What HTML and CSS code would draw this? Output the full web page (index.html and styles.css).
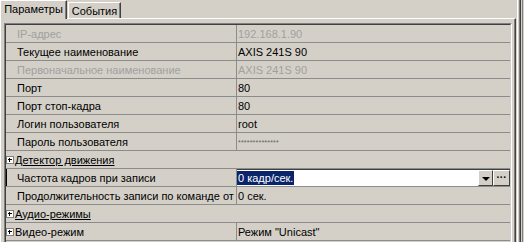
FILE: index.html
```html
<!DOCTYPE html>
<html lang="ru">
<head>
  <meta charset="UTF-8" />
  <title>Параметры</title>
  <link rel="stylesheet" href="styles.css">
</head>
<body>
  <div class="window">
    <div class="tabctl">
      <div class="tabs">
        <div class="tab tab-active">Параметры</div>
        <div class="tab tab-events">События</div>
      </div>
      <div class="page">
        <div class="grid">
          <div class="rows">
            <div class="row disabled"><div class="name">IP-адрес</div><div class="value">192.168.1.90</div></div>
            <div class="row"><div class="name">Текущее наименование</div><div class="value">AXIS 241S 90</div></div>
            <div class="row disabled"><div class="name">Первоначальное наименование</div><div class="value">AXIS 241S 90</div></div>
            <div class="row"><div class="name">Порт</div><div class="value">80</div></div>
            <div class="row"><div class="name">Порт стоп-кадра</div><div class="value">80</div></div>
            <div class="row"><div class="name">Логин пользователя</div><div class="value">root</div></div>
            <div class="row"><div class="name">Пароль пользователя</div><div class="value"><span class="password">**************</span></div></div>
            <div class="row group"><span class="plus"></span><span class="group-name link">Детектор движения</span></div>
            <div class="row current">
              <div class="name">Частота кадров при записи</div>
              <div class="value editor">
                <span class="edit"><span class="sel">0 кадр/сек.</span></span>
                <span class="btn drop"><span class="arrow"></span></span>
                <span class="btn dots">···</span>
              </div>
            </div>
            <div class="row"><div class="name">Продолжительность записи по команде от</div><div class="value">0 сек.</div></div>
            <div class="row group"><span class="plus"></span><span class="group-name link">Аудио-режимы</span></div>
            <div class="row group-value"><div class="name"><span class="plus"></span><span class="group-name">Видео-режим</span></div><div class="value">Режим "Unicast"</div></div>
          </div>
        </div>
      </div>
    </div>
    <div class="edge"></div>
  </div>
</body>
</html>
```

FILE: styles.css
```css
body {
  margin: 0;
  background-color: #d4d0c8;
  font-family: "Liberation Sans", Arial, sans-serif;
  font-size: 11px;
  color: #000;
  overflow: hidden;
}
.window {
  display: flex;
  width: 524px;
  height: 242px;
  overflow: hidden;
}
.tabctl {
  width: 516px;
  display: flex;
  flex-direction: column;
}
.tabs {
  display: flex;
  align-items: flex-end;
  height: 18px;
}
.tab {
  box-sizing: border-box;
  display: flex;
  align-items: center;
  justify-content: center;
  border-top: 1px solid #fff;
  border-left: 1px solid #fff;
  border-right: 1px solid #404040;
  box-shadow: inset -1px 0 #808080;
  background-color: #d4d0c8;
}
.tab-active {
  width: 67px;
  height: 19px;
  margin-bottom: -1px;
  padding-bottom: 2px;
  position: relative;
  z-index: 1;
}
.tab-events {
  width: 53px;
  height: 16px;
  margin-left: 1px;
  padding-top: 1px;
}
.page {
  flex: 1;
  box-sizing: border-box;
  border-top: 1px solid #fff;
  border-left: 1px solid #fff;
  border-right: 1px solid #404040;
  box-shadow: inset -1px 0 #808080;
  padding: 4px 3px 0 3px;
}
.grid {
  border-top: 1px solid #808080;
  border-left: 1px solid #808080;
  border-right: 1px solid #fff;
  height: 100%;
  box-sizing: border-box;
}
.rows {
  border-top: 1px solid #404040;
  border-left: 1px solid #404040;
  border-right: 1px solid #d4d0c8;
  height: 100%;
  box-sizing: border-box;
}
.row {
  display: flex;
  height: 17px;
  border-bottom: 1px solid #8c8c8c;
  align-items: center;
  white-space: nowrap;
}
.name {
  box-sizing: border-box;
  width: 231px;
  height: 100%;
  padding-left: 11px;
  border-right: 1px solid #8c8c8c;
  overflow: hidden;
  display: flex;
  align-items: center;
}
.value {
  flex: 1;
  height: 100%;
  padding-left: 1px;
  display: flex;
  align-items: center;
  overflow: hidden;
}
.disabled .name,
.disabled .value {
  color: #a0a0a0;
}
.password {
  font-size: 7px;
  color: #606060;
  letter-spacing: 0.2px;
  padding-top: 2px;
}
.plus {
  position: relative;
  box-sizing: border-box;
  width: 8px;
  height: 8px;
  border: 1px solid #808080;
  background-color: #fff;
  margin-right: 1px;
  flex: none;
}
.plus::before,
.plus::after {
  content: "";
  position: absolute;
  background-color: #000;
}
.plus::before {
  left: 1px;
  top: 2px;
  width: 4px;
  height: 1px;
}
.plus::after {
  left: 2px;
  top: 1px;
  width: 1px;
  height: 4px;
}
.link {
  text-decoration: underline;
}
.group-value .name {
  padding-left: 0;
}
.current .name {
  box-shadow: inset 1px 0 #000;
}
.editor {
  padding-left: 0;
  border-top: 1px solid #404040;
  box-sizing: border-box;
  align-items: stretch;
}
.edit {
  flex: 1;
  background-color: #fff;
  display: flex;
  align-items: center;
}
.sel {
  background-color: #0a246a;
  color: #fff;
  padding: 1px 1px 1px 1px;
}
.btn {
  box-sizing: border-box;
  background-color: #d4d0c8;
  border-top: 1px solid #fff;
  border-left: 1px solid #fff;
  border-right: 1px solid #404040;
  border-bottom: 1px solid #404040;
  display: flex;
  align-items: center;
  justify-content: center;
}
.drop {
  width: 15px;
}
.arrow {
  width: 0;
  height: 0;
  border-left: 4px solid transparent;
  border-right: 4px solid transparent;
  border-top: 4px solid #000;
  margin-top: 1px;
}
.dots {
  width: 17px;
  font-weight: bold;
  font-size: 10px;
  line-height: 1;
}
.edge {
  width: 8px;
  background: linear-gradient(to right, #d4d0c8 0 1px, #fff 1px 2px, #d4d0c8 2px 3px, #808080 3px 4px, #404040 4px 5px, #d4d0c8 5px 6px, #808080 6px 7px, #d4d0c8 7px);
}
```
